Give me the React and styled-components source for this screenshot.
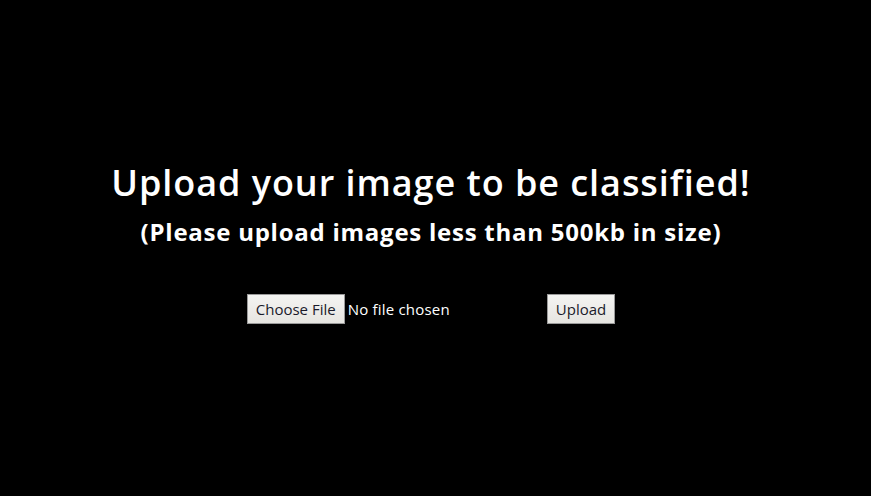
import React from "react";
import styled, { createGlobalStyle } from "styled-components";

const GlobalStyle = createGlobalStyle`
  html, body {
    margin: 0;
    padding: 0;
    background: #000;
  }
  body {
    font-family: "Open Sans", "Noto Sans", sans-serif;
    color: #fff;
  }
`;

const Page = styled.div`
  height: 496px;
  display: flex;
  flex-direction: column;
  align-items: center;
  padding-top: 161px;
  padding-right: 9px;
  box-sizing: border-box;
`;

const Title = styled.h1`
  margin: 0;
  font-size: 36px;
  font-weight: 600;
  line-height: 44px;
  letter-spacing: 0.95px;
`;

const Subtitle = styled.h2`
  margin: 11px 0 0;
  font-size: 24px;
  font-weight: 700;
  line-height: 32px;
  letter-spacing: 0.75px;
`;

const Form = styled.form`
  margin-top: 46px;
  display: flex;
  align-items: center;
`;

const FilePicker = styled.label`
  width: 300px;
  display: flex;
  align-items: center;
  gap: 3px;
`;

const Button = styled.span`
  display: inline-flex;
  align-items: center;
  height: 30px;
  padding: 0 8px;
  box-sizing: border-box;
  background: linear-gradient(#f4f4f2, #e6e5e1);
  border: 1px solid #9a9a9a;
  color: #1a1a2a;
  font-family: inherit;
  font-size: 15px;
  cursor: default;
`;

const FileName = styled.span`
  font-size: 15px;
  letter-spacing: 0.2px;
  color: #fff;
`;

export default function App() {
  return (
    <>
      <GlobalStyle />
      <Page>
        <Title>Upload your image to be classified!</Title>
        <Subtitle>(Please upload images less than 500kb in size)</Subtitle>
        <Form onSubmit={(e) => e.preventDefault()}>
          <FilePicker>
            <Button>Choose File</Button>
            <FileName>No file chosen</FileName>
          </FilePicker>
          <Button as="button" type="submit">Upload</Button>
        </Form>
      </Page>
    </>
  );
}
